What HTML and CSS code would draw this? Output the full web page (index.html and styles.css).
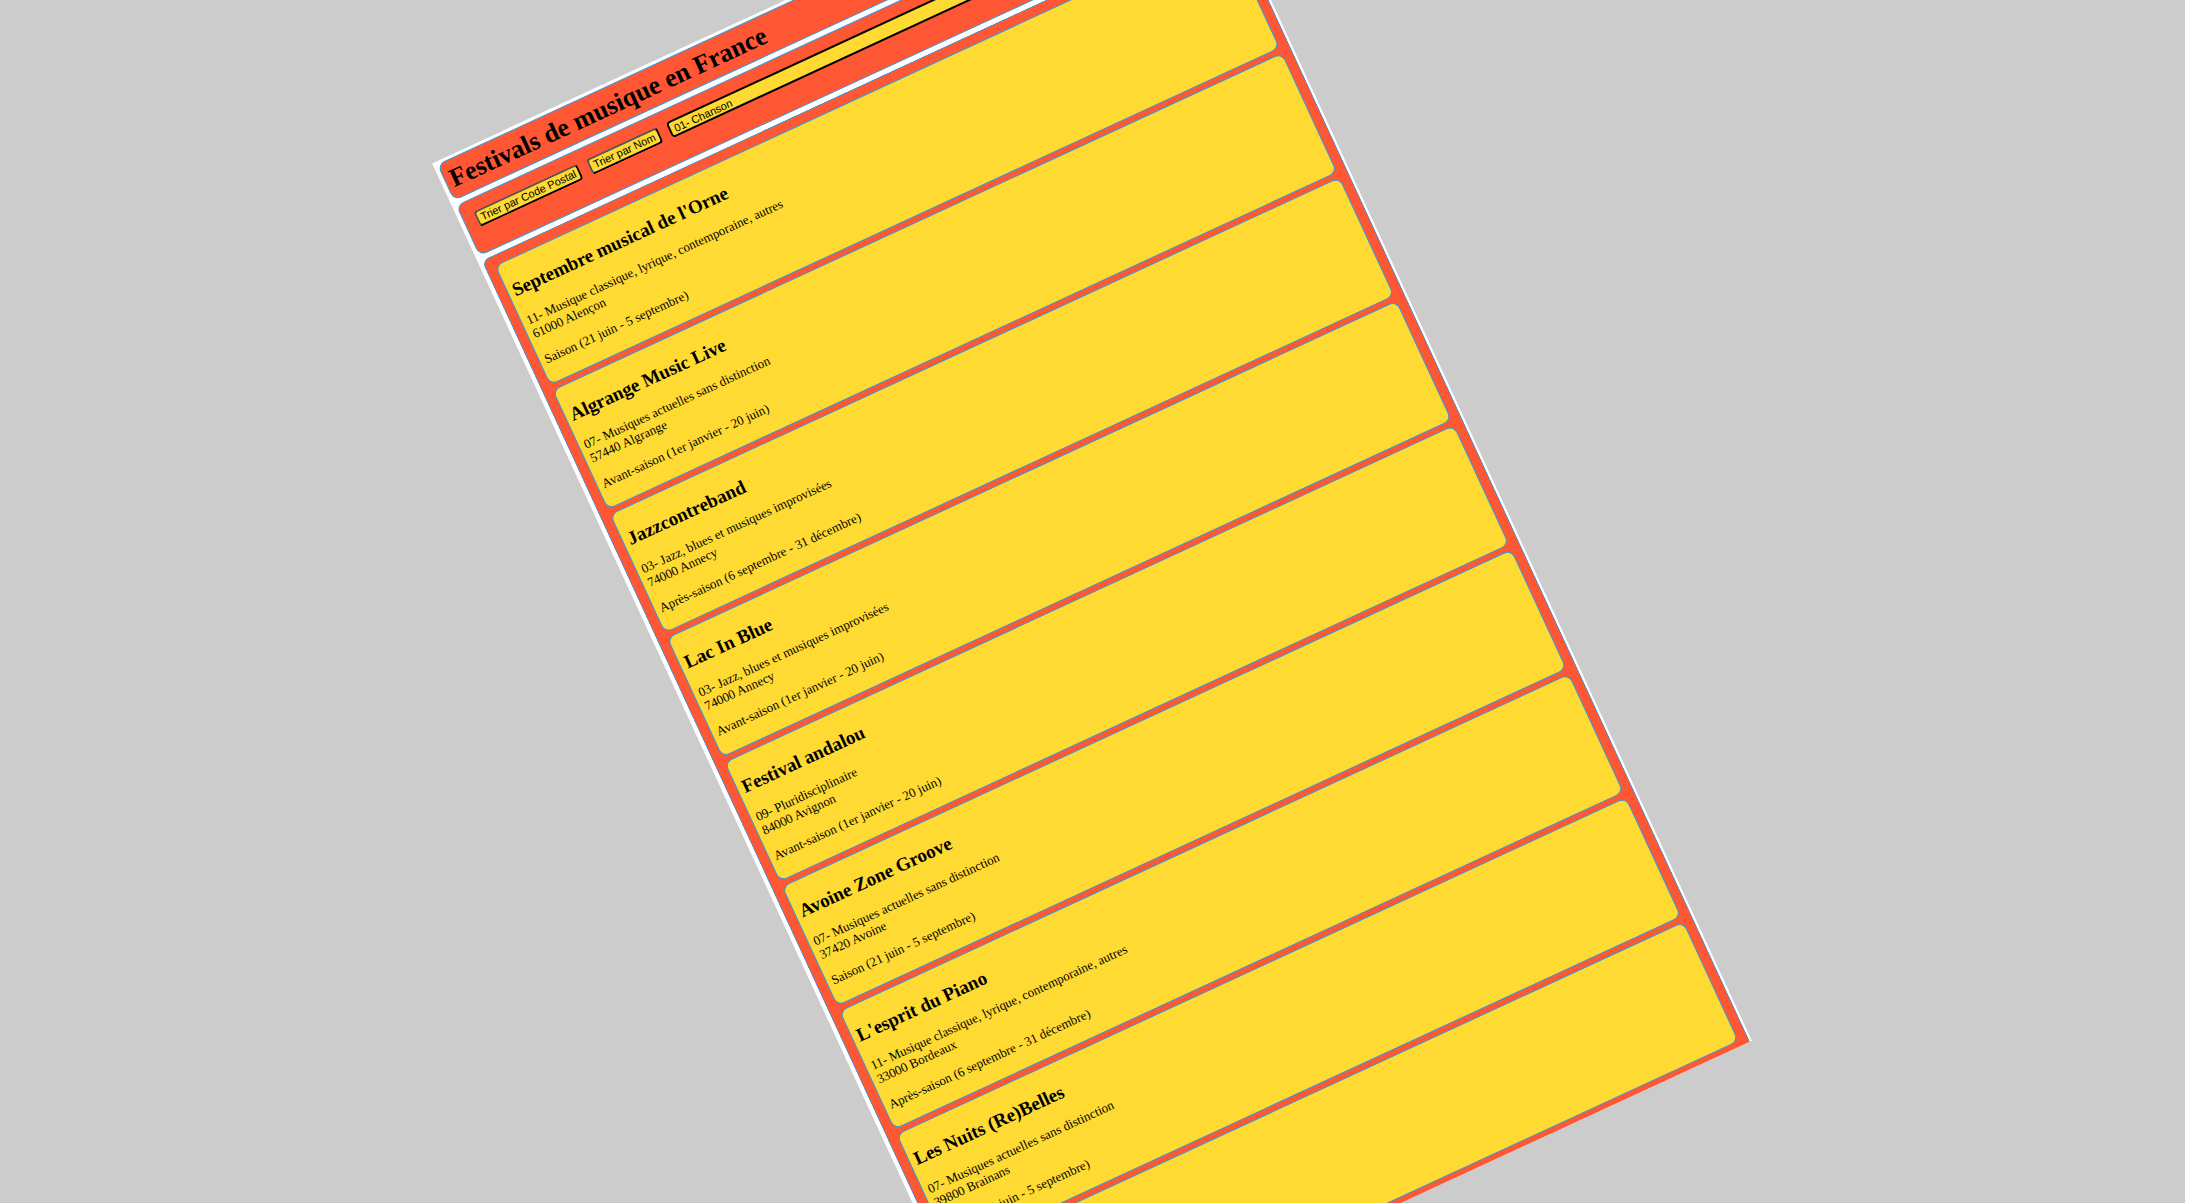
FILE: index.html
```html
<!DOCTYPE html>
<html lang="fr">
<head>
<meta charset="utf-8">
<title>Festivals de musique en France</title>
<link rel="stylesheet" href="styles.css">
</head>
<body>
<div class="sheet">
  <header class="panel title"><h1>Festivals de musique en France</h1></header>
  <form class="panel tools">
    <button type="button">Trier par Code Postal</button>
    <button type="button">Trier par Nom</button>
    <select aria-label="Discipline"><option>01- Chanson</option></select>
  </form>
  <main class="panel list">
    <article class="card"><h2>Septembre musical de l'Orne</h2><p>11- Musique classique, lyrique, contemporaine, autres<br>61000 Alençon</p><p>Saison (21 juin - 5 septembre)</p></article>
    <article class="card"><h2>Algrange Music Live</h2><p>07- Musiques actuelles sans distinction<br>57440 Algrange</p><p>Avant-saison (1er janvier - 20 juin)</p></article>
    <article class="card"><h2>Jazzcontreband</h2><p>03- Jazz, blues et musiques improvisées<br>74000 Annecy</p><p>Après-saison (6 septembre - 31 décembre)</p></article>
    <article class="card"><h2>Lac In Blue</h2><p>03- Jazz, blues et musiques improvisées<br>74000 Annecy</p><p>Avant-saison (1er janvier - 20 juin)</p></article>
    <article class="card"><h2>Festival andalou</h2><p>09- Pluridisciplinaire<br>84000 Avignon</p><p>Avant-saison (1er janvier - 20 juin)</p></article>
    <article class="card"><h2>Avoine Zone Groove</h2><p>07- Musiques actuelles sans distinction<br>37420 Avoine</p><p>Saison (21 juin - 5 septembre)</p></article>
    <article class="card"><h2>L'esprit du Piano</h2><p>11- Musique classique, lyrique, contemporaine, autres<br>33000 Bordeaux</p><p>Après-saison (6 septembre - 31 décembre)</p></article>
    <article class="card"><h2>Les Nuits (Re)Belles</h2><p>07- Musiques actuelles sans distinction<br>39800 Brainans</p><p>Saison (21 juin - 5 septembre)</p></article>
    <article class="card"></article>
  </main>
</div>
</body>
</html>
```
FILE: styles.css
```css
* { box-sizing: border-box; }
body {
  margin: 0;
  height: 100vh;
  display: flex;
  align-items: center;
  justify-content: center;
  overflow: hidden;
  background: #ccc;
  color: #000;
  font: 13px/15px "Liberation Serif", "Times New Roman", serif;
}
.sheet {
  flex: none;
  width: 38%;
  padding: 3px 2px 0 4px;
  display: flex;
  flex-direction: column;
  gap: 5px;
  background: #fff;
  transform: rotate(-24.8deg);
}
.panel {
  background: #ff5733;
  border: 1px solid #3498db;
  border-radius: 8px;
}
.title { padding: 5px; }
h1 { margin: 0; font-size: 26px; line-height: 28px; }
.tools {
  display: flex;
  align-items: flex-start;
  gap: 10px;
  height: 56px;
  padding: 12px;
}
.tools button, .tools select {
  height: 17px;
  margin: 0;
  font: 11px/13px "Liberation Sans", Arial, sans-serif;
  color: #000;
  background: #ffda33;
  border-radius: 4px;
}
.tools button { padding: 0 3px; border: 2px outset #000; }
.tools select { flex: 1; padding: 0; border: 2px solid #000; }
.list {
  padding: 9px 9px 5px;
  border-bottom: 0;
  border-radius: 8px 8px 0 0;
  display: grid;
  grid-auto-rows: 1fr;
  gap: 5px;
  height: 1241px;
}
.card {
  padding: 5px 5px 0;
  background: #ffda33;
  border: 1px solid #3498db;
  border-radius: 8px;
}
.card h2 { margin: 14px 0; font-size: 19px; line-height: 22px; }
.card p { margin: 13px 0 0; }
```
